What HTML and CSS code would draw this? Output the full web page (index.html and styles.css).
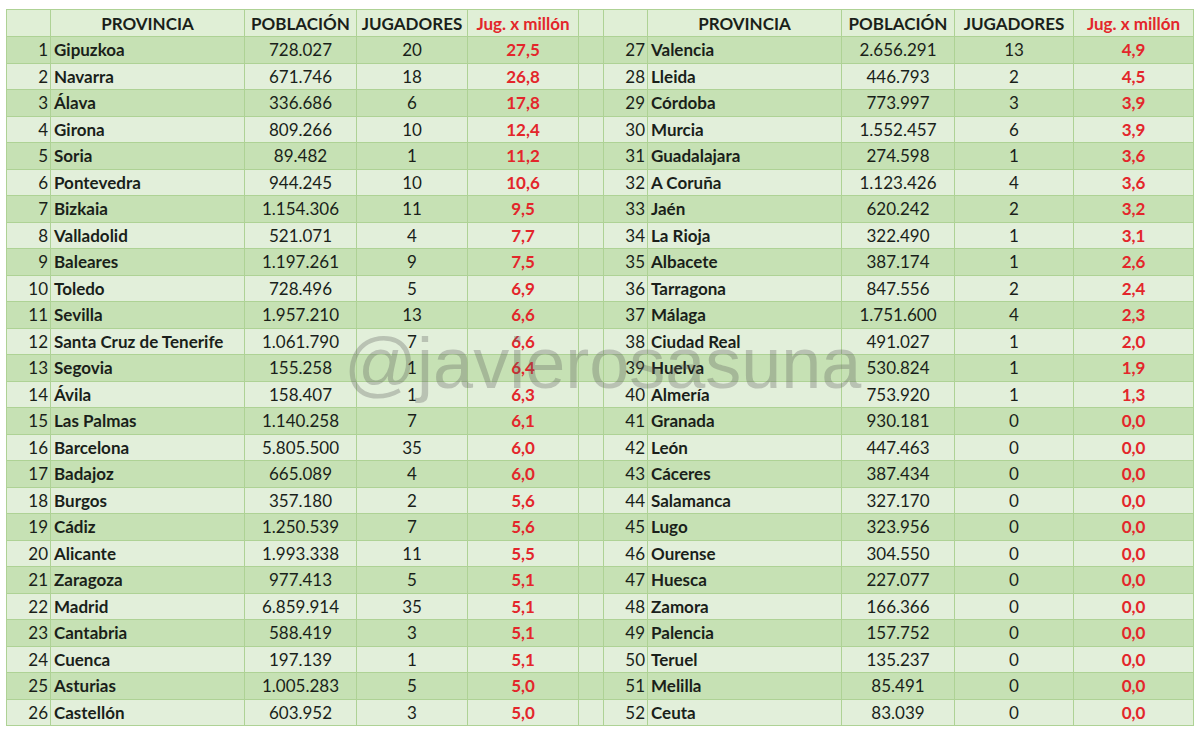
FILE: index.html
```html
<!DOCTYPE html>
<html lang="es">
<head>
<meta charset="utf-8">
<title>Jugadores por provincia</title>
<link rel="stylesheet" href="styles.css">
</head>
<body>
<div class="sheet">
<table class="grid">
<colgroup>
<col class="c-n"><col class="c-p"><col class="c-pop"><col class="c-j"><col class="c-r">
<col class="c-gap">
<col class="c-n"><col class="c-p"><col class="c-pop2"><col class="c-j2"><col class="c-r2">
</colgroup>
<thead>
<tr>
<th></th><th>PROVINCIA</th><th>POBLACIÓN</th><th>JUGADORES</th><th class="red">Jug. x millón</th>
<th></th>
<th></th><th>PROVINCIA</th><th>POBLACIÓN</th><th>JUGADORES</th><th class="red">Jug. x millón</th>
</tr>
</thead>
<tbody>
<tr><td class="n">1</td><td class="p">Gipuzkoa</td><td>728.027</td><td>20</td><td class="r">27,5</td><td></td><td class="n">27</td><td class="p">Valencia</td><td>2.656.291</td><td>13</td><td class="r">4,9</td></tr>
<tr><td class="n">2</td><td class="p">Navarra</td><td>671.746</td><td>18</td><td class="r">26,8</td><td></td><td class="n">28</td><td class="p">Lleida</td><td>446.793</td><td>2</td><td class="r">4,5</td></tr>
<tr><td class="n">3</td><td class="p">Álava</td><td>336.686</td><td>6</td><td class="r">17,8</td><td></td><td class="n">29</td><td class="p">Córdoba</td><td>773.997</td><td>3</td><td class="r">3,9</td></tr>
<tr><td class="n">4</td><td class="p">Girona</td><td>809.266</td><td>10</td><td class="r">12,4</td><td></td><td class="n">30</td><td class="p">Murcia</td><td>1.552.457</td><td>6</td><td class="r">3,9</td></tr>
<tr><td class="n">5</td><td class="p">Soria</td><td>89.482</td><td>1</td><td class="r">11,2</td><td></td><td class="n">31</td><td class="p">Guadalajara</td><td>274.598</td><td>1</td><td class="r">3,6</td></tr>
<tr><td class="n">6</td><td class="p">Pontevedra</td><td>944.245</td><td>10</td><td class="r">10,6</td><td></td><td class="n">32</td><td class="p">A Coruña</td><td>1.123.426</td><td>4</td><td class="r">3,6</td></tr>
<tr><td class="n">7</td><td class="p">Bizkaia</td><td>1.154.306</td><td>11</td><td class="r">9,5</td><td></td><td class="n">33</td><td class="p">Jaén</td><td>620.242</td><td>2</td><td class="r">3,2</td></tr>
<tr><td class="n">8</td><td class="p">Valladolid</td><td>521.071</td><td>4</td><td class="r">7,7</td><td></td><td class="n">34</td><td class="p">La Rioja</td><td>322.490</td><td>1</td><td class="r">3,1</td></tr>
<tr><td class="n">9</td><td class="p">Baleares</td><td>1.197.261</td><td>9</td><td class="r">7,5</td><td></td><td class="n">35</td><td class="p">Albacete</td><td>387.174</td><td>1</td><td class="r">2,6</td></tr>
<tr><td class="n">10</td><td class="p">Toledo</td><td>728.496</td><td>5</td><td class="r">6,9</td><td></td><td class="n">36</td><td class="p">Tarragona</td><td>847.556</td><td>2</td><td class="r">2,4</td></tr>
<tr><td class="n">11</td><td class="p">Sevilla</td><td>1.957.210</td><td>13</td><td class="r">6,6</td><td></td><td class="n">37</td><td class="p">Málaga</td><td>1.751.600</td><td>4</td><td class="r">2,3</td></tr>
<tr><td class="n">12</td><td class="p">Santa Cruz de Tenerife</td><td>1.061.790</td><td>7</td><td class="r">6,6</td><td></td><td class="n">38</td><td class="p">Ciudad Real</td><td>491.027</td><td>1</td><td class="r">2,0</td></tr>
<tr><td class="n">13</td><td class="p">Segovia</td><td>155.258</td><td>1</td><td class="r">6,4</td><td></td><td class="n">39</td><td class="p">Huelva</td><td>530.824</td><td>1</td><td class="r">1,9</td></tr>
<tr><td class="n">14</td><td class="p">Ávila</td><td>158.407</td><td>1</td><td class="r">6,3</td><td></td><td class="n">40</td><td class="p">Almería</td><td>753.920</td><td>1</td><td class="r">1,3</td></tr>
<tr><td class="n">15</td><td class="p">Las Palmas</td><td>1.140.258</td><td>7</td><td class="r">6,1</td><td></td><td class="n">41</td><td class="p">Granada</td><td>930.181</td><td>0</td><td class="r">0,0</td></tr>
<tr><td class="n">16</td><td class="p">Barcelona</td><td>5.805.500</td><td>35</td><td class="r">6,0</td><td></td><td class="n">42</td><td class="p">León</td><td>447.463</td><td>0</td><td class="r">0,0</td></tr>
<tr><td class="n">17</td><td class="p">Badajoz</td><td>665.089</td><td>4</td><td class="r">6,0</td><td></td><td class="n">43</td><td class="p">Cáceres</td><td>387.434</td><td>0</td><td class="r">0,0</td></tr>
<tr><td class="n">18</td><td class="p">Burgos</td><td>357.180</td><td>2</td><td class="r">5,6</td><td></td><td class="n">44</td><td class="p">Salamanca</td><td>327.170</td><td>0</td><td class="r">0,0</td></tr>
<tr><td class="n">19</td><td class="p">Cádiz</td><td>1.250.539</td><td>7</td><td class="r">5,6</td><td></td><td class="n">45</td><td class="p">Lugo</td><td>323.956</td><td>0</td><td class="r">0,0</td></tr>
<tr><td class="n">20</td><td class="p">Alicante</td><td>1.993.338</td><td>11</td><td class="r">5,5</td><td></td><td class="n">46</td><td class="p">Ourense</td><td>304.550</td><td>0</td><td class="r">0,0</td></tr>
<tr><td class="n">21</td><td class="p">Zaragoza</td><td>977.413</td><td>5</td><td class="r">5,1</td><td></td><td class="n">47</td><td class="p">Huesca</td><td>227.077</td><td>0</td><td class="r">0,0</td></tr>
<tr><td class="n">22</td><td class="p">Madrid</td><td>6.859.914</td><td>35</td><td class="r">5,1</td><td></td><td class="n">48</td><td class="p">Zamora</td><td>166.366</td><td>0</td><td class="r">0,0</td></tr>
<tr><td class="n">23</td><td class="p">Cantabria</td><td>588.419</td><td>3</td><td class="r">5,1</td><td></td><td class="n">49</td><td class="p">Palencia</td><td>157.752</td><td>0</td><td class="r">0,0</td></tr>
<tr><td class="n">24</td><td class="p">Cuenca</td><td>197.139</td><td>1</td><td class="r">5,1</td><td></td><td class="n">50</td><td class="p">Teruel</td><td>135.237</td><td>0</td><td class="r">0,0</td></tr>
<tr><td class="n">25</td><td class="p">Asturias</td><td>1.005.283</td><td>5</td><td class="r">5,0</td><td></td><td class="n">51</td><td class="p">Melilla</td><td>85.491</td><td>0</td><td class="r">0,0</td></tr>
<tr><td class="n">26</td><td class="p">Castellón</td><td>603.952</td><td>3</td><td class="r">5,0</td><td></td><td class="n">52</td><td class="p">Ceuta</td><td>83.039</td><td>0</td><td class="r">0,0</td></tr>
</tbody>
</table>
<div class="watermark">@javierosasuna</div>
</div>
</body>
</html>
```

FILE: styles.css
```css
html, body {
  margin: 0;
  padding: 0;
  background: #ffffff;
}

body {
  padding: 9px 0 0 6px;
  font-family: Lato, "Liberation Sans", sans-serif;
  color: #1a1f1a;
}

.sheet {
  position: relative;
  width: 1188px;
}

.grid {
  border-collapse: collapse;
  table-layout: fixed;
  width: 1188px;
  font-size: 17px;
}

.c-n { width: 44px; }
.c-p { width: 194px; }
.c-pop { width: 112px; }
.c-j { width: 111px; }
.c-r { width: 111px; }
.c-gap { width: 25px; }
.c-pop2 { width: 113px; }
.c-j2 { width: 119px; }
.c-r2 { width: 120px; }

.grid th,
.grid td {
  border: 1px solid #aed295;
  padding: 0 3px;
  text-align: center;
  white-space: nowrap;
  overflow: hidden;
  line-height: 1;
}

.grid thead tr {
  height: 27px;
  background: #e0efd6;
}

.grid th {
  font-weight: 700;
  color: #1a1f1a;
}

.grid tbody tr {
  height: 26.5px;
}

.grid tbody tr:nth-child(odd) {
  background: #c6e1b4;
}

.grid tbody tr:nth-child(even) {
  background: #e2efda;
}

.grid td.n {
  text-align: right;
  padding-right: 2px;
}

.grid td.p {
  text-align: left;
  font-weight: 700;
  padding-left: 3px;
}

.grid .red,
.grid td.r {
  color: #e3262b;
  font-weight: 700;
}

.watermark {
  position: absolute;
  left: 338px;
  top: 318px;
  font-family: "Liberation Sans", Arial, sans-serif;
  font-size: 72px;
  line-height: 1;
  color: rgba(90, 90, 90, 0.3);
  pointer-events: none;
  white-space: nowrap;
}
```
